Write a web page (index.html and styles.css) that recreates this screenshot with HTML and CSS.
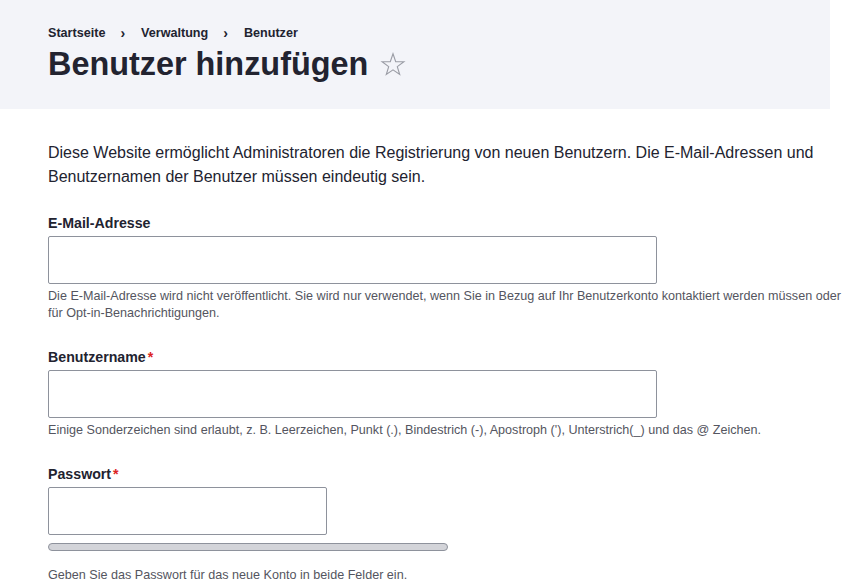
FILE: index.html
```html
<!DOCTYPE html>
<html lang="de">
<head>
<meta charset="utf-8">
<title>Benutzer hinzufügen</title>
<link rel="stylesheet" href="styles.css">
</head>
<body>
<header class="page-header">
  <nav class="breadcrumb">
    <a href="#">Startseite</a>
    <span class="sep">›</span>
    <a href="#">Verwaltung</a>
    <span class="sep">›</span>
    <a href="#">Benutzer</a>
  </nav>
  <div class="title-row">
    <h1 class="page-title">Benutzer hinzufügen</h1>
    <svg class="star" width="26" height="26" viewBox="0 0 26 26" aria-hidden="true">
      <path d="M13 1.8 L15.7 9.6 L23.9 9.7 L17.3 14.6 L19.7 22.5 L13 17.8 L6.3 22.5 L8.7 14.6 L2.1 9.7 L10.3 9.6 Z" fill="none" stroke="#9a9ca5" stroke-width="1.1" stroke-linejoin="miter"/>
    </svg>
  </div>
</header>
<main class="content">
  <p class="intro">Diese Website ermöglicht Administratoren die Registrierung von neuen Benutzern. Die E-Mail-Adressen und Benutzernamen der Benutzer müssen eindeutig sein.</p>

  <div class="form-item">
    <label class="form-label" for="mail">E-Mail-Adresse</label>
    <input class="form-input wide" id="mail" type="email">
    <div class="form-help">Die E-Mail-Adresse wird nicht veröffentlicht. Sie wird nur verwendet, wenn Sie in Bezug auf Ihr Benutzerkonto kontaktiert werden müssen oder für Opt-in-Benachrichtigungen.</div>
  </div>

  <div class="form-item">
    <label class="form-label" for="name">Benutzername<span class="req">*</span></label>
    <input class="form-input wide" id="name" type="text">
    <div class="form-help">Einige Sonderzeichen sind erlaubt, z. B. Leerzeichen, Punkt (.), Bindestrich (-), Apostroph ('), Unterstrich(_) und das @ Zeichen.</div>
  </div>

  <div class="form-item">
    <label class="form-label" for="pass">Passwort<span class="req">*</span></label>
    <input class="form-input narrow" id="pass" type="password">
    <div class="strength"></div>
    <div class="form-help help-gap">Geben Sie das Passwort für das neue Konto in beide Felder ein.</div>
  </div>
</main>
</body>
</html>
```

FILE: styles.css
```css
html, body {
  margin: 0;
  padding: 0;
  overflow: hidden;
  background: #ffffff;
}
body {
  font-family: "Liberation Sans", Arial, sans-serif;
  color: #222330;
  width: 843px;
  height: 579px;
}
.page-header {
  width: 830px;
  background: #f3f4f9;
  padding: 25px 0 25px 48px;
  box-sizing: border-box;
  height: 109px;
}
.breadcrumb {
  display: flex;
  align-items: center;
  font-size: 12.6px;
  font-weight: bold;
  line-height: 16px;
  height: 16px;
}
.breadcrumb a {
  color: #222330;
  text-decoration: none;
}
.breadcrumb .sep {
  margin: 0 16px 0 15px;
  font-size: 14px;
}
.title-row {
  display: flex;
  align-items: center;
  margin-top: 3px;
  height: 40px;
}
.page-title {
  margin: 0;
  font-size: 32.4px;
  line-height: 40px;
  font-weight: bold;
  color: #222330;
}
.star {
  margin-left: 12px;
  margin-top: 1px;
}
.content {
  padding: 32px 0 0 48px;
  width: 800px;
}
.intro {
  margin: 0 0 25px;
  font-size: 16px;
  line-height: 24px;
  color: #222330;
}
.form-item {
  margin-bottom: 26px;
}
.form-label {
  display: block;
  font-size: 14.2px;
  font-weight: bold;
  line-height: 18px;
  margin-bottom: 4px;
}
.req {
  color: #dc2323;
  margin-left: 2px;
}
.form-input {
  display: block;
  box-sizing: border-box;
  height: 48px;
  border: 1px solid #8e929c;
  border-radius: 2px;
  background: #fff;
  margin: 0;
  padding: 0 15px;
}
.wide { width: 609px; }
.narrow { width: 279px; }
.form-help {
  margin-top: 4px;
  font-size: 12.6px;
  line-height: 17px;
  color: #545560;
}
.strength {
  margin-top: 8px;
  width: 400px;
  height: 8px;
  box-sizing: border-box;
  background: #d3d4d9;
  border: 1px solid #8e929c;
  border-radius: 4px;
}
.help-gap {
  margin-top: 16px;
}
```
